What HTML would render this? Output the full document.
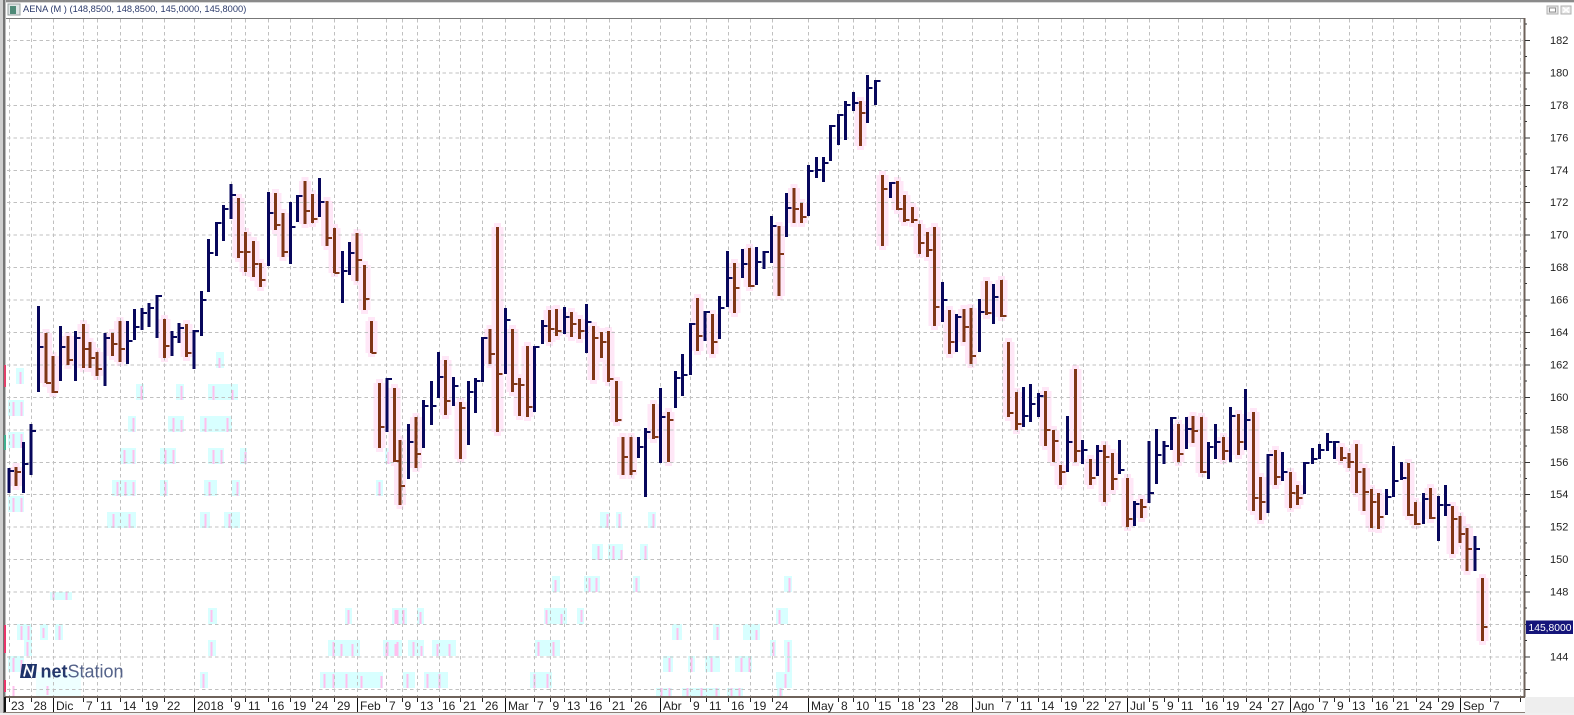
<!DOCTYPE html>
<html><head><meta charset="utf-8"><title>AENA</title>
<style>html,body{margin:0;padding:0;background:#fff;width:1574px;height:715px;overflow:hidden}svg{display:block}text{font-family:"Liberation Sans",sans-serif}</style></head>
<body>
<svg width="1574" height="715" viewBox="0 0 1574 715" xmlns="http://www.w3.org/2000/svg">
<defs>
<path id="rs" d="M16 467V486M46 333V383M53 356V393M68 336V365M83.5 324V368M90 342V368M97 352V376M112.5 333V356M120 321V362M164.5 319V358M186.5 324V357M238.5 198V258M245.5 232V272M253.5 241V277M260.5 263V287M275.5 193V230M283 213V257M305 181V224M312.5 194V223M327 201V246M334.5 228V273M357 233V281M364.5 265V310M371.5 321V353M379.5 383V448M394.5 388V462M400 440V505M416 417V468M445.5 360V415M460.5 402V459M490 329V364M497.5 227V432M512.5 329V392M519.5 378V416M527.5 346V417M549.5 310V342M556.5 309V336M571.5 312V337M579.5 319V339M593.5 326V380M601.5 332V358M608.5 331V382M616.5 381V422M623 437V475M631 437V475M653.5 404V439M668.5 412V462M697.5 298V351M712.5 314V354M734.5 263V313M749.5 248V287M779 226V296M794 188V223M801.5 203V223M860.5 101V146M882.5 175V246M897.5 181V210M904.5 195V222M912.5 207V223M919.5 224V254M927.5 232V257M934.5 227V326M949.5 310V354M964 309V342M971 308V364M986.5 281V315M1001.5 280V317M1008.5 342V417M1016.5 392V430M1045.5 391V446M1053.5 430V462M1060.5 465V485M1075.5 369V462M1090.5 459V485M1104.5 445V502M1112.5 453V490M1127.5 478V527M1141.5 499V518M1178.5 424V462M1193 416V443M1201.5 417V473M1223.5 437V460M1238.5 414V455M1253.5 412V511M1260.5 477V520M1275.5 450V485M1290.5 472V508M1297.5 485V505M1341.5 447V461M1349 453V468M1356.5 444V493M1364 468V511M1371.5 489V528M1378.5 493V529M1408.5 463V516M1415.5 502V525M1430.5 488V519M1452.5 506V554M1460 516V543M1467 528V571M1482.5 578V641"/>
</defs>
<rect width="1574" height="715" fill="#fff"/>
<!-- ghost artefacts -->
<rect x="36" y="672" width="45" height="24" fill="#eeffff"/>
<path fill="#d8ffff" d="M136 384h8v16h-8zM176 384h8v16h-8zM208 384h30v16h-30zM128 416h8v16h-8zM168 416h16v16h-16zM200 416h32v16h-32zM120 448h16v16h-16zM160 448h16v16h-16zM208 448h16v16h-16zM240 448h7v16h-7zM112 480h24v16h-24zM160 480h8v16h-8zM204 480h13v16h-13zM232 480h8v16h-8zM107 512h29v16h-29zM200 512h10v16h-10zM224 512h16v16h-16zM16 368h8v16h-8zM8 400h16v16h-16zM8 432h16v16h-16zM8 496h16v16h-16zM376 480h7v16h-7zM385 448h8v16h-8zM216 352h8v16h-8zM600 512h10v16h-10zM616 512h6v16h-6zM648 512h8v16h-8zM592 544h11v16h-11zM608 544h15v16h-15zM640 544h8v16h-8zM552 576h8v16h-8zM584 576h16v16h-16zM633 576h7v16h-7zM784 576h8v16h-8zM392 608h15v16h-15zM417 608h7v16h-7zM544 608h23v16h-23zM577 608h7v16h-7zM776 608h12v16h-12zM384 640h18v16h-18zM408 640h16v16h-16zM432 640h24v16h-24zM535 640h25v16h-25zM770 640h6v16h-6zM784 640h8v16h-8zM663 656h10v16h-10zM688 656h7v16h-7zM705 656h15v16h-15zM735 656h17v16h-17zM785 656h7v16h-7zM403 672h12v16h-12zM424 672h24v16h-24zM530 672h22v16h-22zM776 672h16v16h-16zM656 688h16v8h-16zM682 688h38v8h-38zM727 688h16v8h-16zM777 688h6v8h-6zM713 624h7v16h-7zM743 624h17v16h-17zM672 624h10v16h-10zM17 624h15v16h-15zM40 624h8v16h-8zM55 624h8v16h-8zM24 640h8v16h-8zM208 640h8v16h-8zM328 640h32v16h-32zM383 640h17v16h-17zM8 656h16v16h-16zM200 672h8v16h-8zM320 672h63v16h-63zM208 608h9v16h-9zM345 608h7v16h-7zM392 608h8v16h-8zM50 592h22v8h-22z"/>
<path fill="#ffbfee" d="M140.500 386h2v14h-2zM180.500 386h2v14h-2zM212.500 386h2v14h-2zM231.500 390h2v10h-2zM132.500 418h2v14h-2zM172.500 418h2v14h-2zM180.500 420h2v12h-2zM204.500 418h2v14h-2zM226.500 418h2v14h-2zM123.500 450h2v14h-2zM132.500 450h2v14h-2zM164.500 450h2v14h-2zM172.500 450h2v14h-2zM212.500 450h2v14h-2zM220.500 450h2v14h-2zM244.500 452h2v12h-2zM116.500 482h2v14h-2zM124.500 482h2v14h-2zM132.500 482h2v14h-2zM164.500 482h2v14h-2zM208.500 482h2v14h-2zM236.500 482h2v14h-2zM112.500 514h2v14h-2zM128.500 514h2v14h-2zM204.500 514h2v14h-2zM228.500 514h2v14h-2zM19.500 372h2v12h-2zM12.500 402h2v14h-2zM20.500 402h2v14h-2zM12.500 434h2v14h-2zM20.500 434h2v14h-2zM12.500 498h2v14h-2zM20.500 498h2v14h-2zM378.500 482h2v14h-2zM387.500 452h2v12h-2zM218.500 358h2v10h-2zM606.500 514h2v14h-2zM618.500 514h2v14h-2zM652.500 514h2v14h-2zM597.500 546h2v14h-2zM612.500 546h2v14h-2zM620.500 550h2v10h-2zM644.500 546h2v14h-2zM554.500 580h2v12h-2zM588.500 578h2v14h-2zM595.500 578h2v14h-2zM635.500 578h2v14h-2zM788.500 578h2v14h-2zM396.500 610h2v14h-2zM402.500 610h2v14h-2zM419.500 612h2v12h-2zM545.500 610h2v14h-2zM560.500 614h2v10h-2zM580.500 610h2v12h-2zM778.500 610h2v14h-2zM386.500 642h2v14h-2zM396.500 642h2v14h-2zM412.500 642h2v14h-2zM420.500 646h2v10h-2zM436.500 644h2v12h-2zM448.500 644h2v12h-2zM537.500 642h2v14h-2zM552.500 642h2v14h-2zM772.500 642h2v14h-2zM787.500 642h2v14h-2zM668.500 658h2v14h-2zM690.500 658h2v14h-2zM710.500 658h2v14h-2zM740.500 658h2v14h-2zM748.500 658h2v14h-2zM787.500 658h2v14h-2zM406.500 674h2v14h-2zM426.500 674h2v14h-2zM438.500 674h2v14h-2zM533.500 674h2v14h-2zM546.500 674h2v14h-2zM784.500 674h2v14h-2zM660.500 688h2v8h-2zM668.500 688h2v8h-2zM686.500 688h2v8h-2zM700.500 688h2v8h-2zM715.500 688h2v8h-2zM730.500 688h2v8h-2zM738.500 688h2v8h-2zM779.500 688h2v8h-2zM716.500 627h2v13h-2zM755.500 630h2v10h-2zM676.500 628h2v12h-2zM20.500 626h2v14h-2zM27.500 626h2v14h-2zM42.500 628h2v10h-2zM58.500 626h2v14h-2zM26.500 642h2v14h-2zM210.500 642h2v14h-2zM332.500 642h2v14h-2zM340.500 644h2v12h-2zM351.500 644h2v12h-2zM385.500 644h2v12h-2zM394.500 644h2v12h-2zM12.500 658h2v14h-2zM20.500 660h2v12h-2zM202.500 674h2v14h-2zM323.500 674h2v14h-2zM332.500 674h2v14h-2zM345.500 674h2v14h-2zM360.500 676h2v12h-2zM380.500 676h2v12h-2zM210.500 610h2v12h-2zM347.500 610h2v14h-2zM394.500 610h2v14h-2zM52.500 592h2v8h-2zM65.500 592h2v8h-2zM46.500 686h2v9h-2zM12.500 686h2v10h-2z"/>
<!-- red halos -->
<use href="#rs" fill="none" stroke="#ffe7f7" stroke-width="12"/>
<use href="#rs" fill="none" stroke="#ffe7f7" stroke-width="7" transform="translate(0,-4)"/>
<use href="#rs" fill="none" stroke="#ffe7f7" stroke-width="7" transform="translate(0,4)"/>
<!-- grid -->
<path fill="none" stroke="#c0c0c0" stroke-width="1" stroke-dasharray="3.500 3" d="M7 40.500H1523M7 73H1523M7 105.500H1523M7 138H1523M7 170.500H1523M7 202.500H1523M7 235H1523M7 267.500H1523M7 300H1523M7 332.500H1523M7 365H1523M7 397.500H1523M7 430H1523M7 462.500H1523M7 494.500H1523M7 527H1523M7 559.500H1523M7 592H1523M7 624.500H1523M7 657H1523M7 689.500H1523"/>
<path fill="none" stroke="#c0c0c0" stroke-width="1" stroke-dasharray="3.500 3" d="M9.500 19V696M31.500 19V696M53.500 19V696M83.500 19V696M97.500 19V696M120.500 19V696M142.500 19V696M164.500 19V696M194.500 19V696M231.500 19V696M245.500 19V696M268.500 19V696M290.500 19V696M312.500 19V696M334.500 19V696M357.500 19V696M386.500 19V696M402.500 19V696M417.500 19V696M439.500 19V696M460.500 19V696M482.500 19V696M505.500 19V696M534.500 19V696M550.500 19V696M564.500 19V696M586.500 19V696M609.500 19V696M631.500 19V696M660.500 19V696M690.500 19V696M706.500 19V696M728.500 19V696M750.500 19V696M772.500 19V696M808.500 19V696M838.500 19V696M853.500 19V696M875.500 19V696M898.500 19V696M919.500 19V696M942.500 19V696M972.500 19V696M1002.500 19V696M1017.500 19V696M1038.500 19V696M1061.500 19V696M1083.500 19V696M1105.500 19V696M1127.500 19V696M1149.500 19V696M1178.500 19V696M1202.500 19V696M1223.500 19V696M1246.500 19V696M1268.500 19V696M1290.500 19V696M1319.500 19V696M1349.500 19V696M1372.500 19V696M1393.500 19V696M1416.500 19V696M1438.500 19V696M1460.500 19V696M1490.500 19V696M1520.500 19V696"/>
<!-- bars -->
<use href="#rs" fill="none" stroke="#7f3516" stroke-width="3"/>
<path fill="none" stroke="#7f3516" stroke-width="2" d="M16 472h5M46 383h5M53 392h5M68 360h5M83.5 349h5M90 358h5M97 369h5M112.5 344h5M120 349h5M164.5 346h5M186.5 353h5M238.5 252h5M245.5 252h5M253.5 264h5M260.5 280h5M275.5 225h5M283 252h5M305 211h5M312.5 219h5M327 238h5M334.5 273h5M357 260h5M364.5 299h5M371.5 353h5M379.5 427h5M394.5 461h5M400 486h5M416 454h5M445.5 401h5M460.5 408h5M490 354h5M497.5 374h5M512.5 384h5M519.5 385h5M527.5 407h5M549.5 329h5M556.5 331h5M571.5 324h5M579.5 331h5M593.5 338h5M601.5 342h5M608.5 379h5M616.5 420h5M623 457h5M631 471h5M653.5 437h5M668.5 420h5M697.5 336h5M712.5 342h5M734.5 288h5M749.5 286h5M779 254h5M794 209h5M801.5 217h5M860.5 113h5M882.5 189h5M897.5 209h5M904.5 220h5M912.5 220h5M919.5 243h5M927.5 250h5M934.5 307h5M949.5 342h5M964 327h5M971 356h5M986.5 313h5M1001.5 316h5M1008.5 413h5M1016.5 424h5M1045.5 430h5M1053.5 441h5M1060.5 472h5M1075.5 451h5M1090.5 478h5M1104.5 457h5M1112.5 479h5M1127.5 519h5M1141.5 507h5M1178.5 454h5M1193 431h5M1201.5 472h5M1223.5 451h5M1238.5 442h5M1253.5 498h5M1260.5 502h5M1275.5 477h5M1290.5 493h5M1297.5 498h5M1341.5 458h5M1349 462h5M1356.5 472h5M1364 492h5M1371.5 502h5M1378.5 517h5M1408.5 515h5M1415.5 524h5M1430.5 518h5M1452.5 519h5M1460 534h5M1467 549h5M1482.5 627h5"/>
<path fill="none" stroke="#07075c" stroke-width="3" d="M9 468V493M23.5 442V493M31 424V475M38.5 306V392M60.5 326V381M75.5 331V381M105 333V386M127.5 321V364M134.5 309V340M142 308V330M149 303V327M157 295V338M172 331V356M179 323V343M194 330V369M201.5 291V336M208.5 239V292M216.5 222V256M223.5 205V241M231 184V219M268.5 192V266M290.5 202V264M297.5 195V222M319.5 178V217M342.5 251V303M349.5 242V275M387 378V432M408.5 424V479M423.5 400V448M431.5 381V425M438.5 352V398M453.5 377V406M468.5 381V445M475.5 378V413M482.5 337V382M505.5 308V374M534.5 346V412M542.5 320V344M564.5 307V334M586.5 304V353M638.5 437V458M645.5 428V497M660.5 388V463M675.5 371V408M682.5 354V396M690.5 323V375M705 311V341M719.5 296V339M727.5 251V307M742.5 249V278M756.5 247V285M764 251V269M771.5 216V263M786.5 193V237M808.5 165V216M816.5 157V178M823.5 157V182M830.5 125V161M838.5 114V145M845.5 101V140M853.5 92V111M867.5 75V123M875.5 80V105M890.5 182V198M942.5 282V322M956.5 314V352M979.5 299V352M993.5 284V324M1023.5 387V427M1030.5 384V422M1038.5 393V417M1067.5 416V472M1082.5 440V464M1097.5 445V476M1119.5 440V474M1134.5 501V526M1149 441V503M1156.5 429V484M1164 441V464M1171.5 417V450M1186.5 417V449M1208.5 442V479M1215.5 424V459M1230.5 407V462M1245.5 389V450M1268 454V513M1282.5 452V481M1304.5 462V494M1312.5 448V464M1319.5 444V459M1327.5 433V451M1334.5 441V459M1386.5 489V515M1393.5 446V497M1401.5 462V480M1423.5 493V524M1438.5 496V541M1445.5 485V516M1475 536V571"/>
<path fill="none" stroke="#07075c" stroke-width="2" d="M9 471h5M23.5 464h5M31 431h5M38.5 347h5M60.5 347h5M75.5 338h5M105 338h5M127.5 341h5M134.5 327h5M142 313h5M149 308h5M157 296h5M172 337h5M179 328h5M194 331h5M201.5 300h5M208.5 253h5M216.500 223h5M223.5 209h5M231 195h5M268.5 213h5M290.5 227h5M297.5 196h5M319.5 202h5M342.5 271h5M349.5 253h5M387 379h5M408.5 442h5M423.5 406h5M431.5 406h5M438.5 377h5M453.5 386h5M468.5 392h5M475.5 381h5M482.5 338h5M505.5 320h5M534.5 347h5M542.5 326h5M564.5 317h5M586.5 322h5M638.5 447h5M645.5 432h5M660.5 417h5M675.5 378h5M682.5 375h5M690.5 324h5M705 312h5M719.5 308h5M727.5 278h5M742.5 264h5M756.5 262h5M764 252h5M771.5 226h5M786.5 208h5M808.5 171h5M816.5 170h5M823.5 163h5M830.5 126h5M838.5 115h5M845.5 105h5M853.5 103h5M867.5 88h5M875.5 81h5M890.5 183h5M942.5 300h5M956.5 317h5M979.5 312h5M993.5 297h5M1023.5 416h5M1030.5 404h5M1038.5 396h5M1067.5 442h5M1082.5 450h5M1097.5 451h5M1119.5 470h5M1134.5 504h5M1149 493h5M1156.5 455h5M1164 446h5M1171.5 418h5M1186.5 429h5M1208.5 447h5M1215.5 442h5M1230.5 416h5M1245.5 420h5M1268 455h5M1282.5 472h5M1304.5 463h5M1312.5 459h5M1319.5 450h5M1327.5 442h5M1334.5 442h5M1386.5 497h5M1393.5 481h5M1401.5 478h5M1423.5 499h5M1438.5 505h5M1445.5 505h5M1475 549h5"/>
<!-- frame -->
<rect x="0" y="0" width="1574" height="18" fill="#fff"/>
<rect x="0" y="0" width="1574" height="2" fill="#8a8a8a"/>
<rect x="0" y="2" width="1574" height="1" fill="#d8d8d8"/>
<rect x="0" y="18" width="1524" height="1" fill="#777"/>
<rect x="0" y="0" width="3" height="715" fill="#cfcfcf"/>
<rect x="3" y="0" width="2" height="715" fill="#767676"/>
<rect x="5" y="0" width="1" height="715" fill="#bdbdbd"/>
<rect x="4" y="365" width="2" height="22" fill="#e0406a"/>
<rect x="4" y="435" width="2" height="15" fill="#40b090"/>
<rect x="4" y="625" width="2" height="28" fill="#e8356a"/>
<rect x="4" y="680" width="2" height="12" fill="#e8356a"/>
<!-- title -->
<rect x="8" y="4" width="12" height="11" fill="#dfe6e6" stroke="#9aa0a0"/>
<rect x="10" y="6" width="6" height="8" fill="#4f8a78"/>
<text x="23" y="12" font-size="9.300" fill="#2b3a6b">AENA (M ) (148,8500, 148,8500, 145,0000, 145,8000)</text>
<rect x="1547" y="6" width="11" height="8" fill="#e8e8e8" stroke="#b0b0b0"/>
<rect x="1549.500" y="8" width="6" height="4" fill="#fff" stroke="#8f8f8f"/>
<rect x="1561" y="6" width="10" height="8" fill="#e8e8e8" stroke="#b0b0b0"/>
<path d="M1563 7.500l6 5M1569 7.500l-6 5" stroke="#fff" stroke-width="1.500"/>
<!-- logo -->
<path d="M22 664h15l-1.500 14h-15.500z" fill="#1d3269"/>
<path d="M24 676.500l2.500-10.500 5 10 2-10.500" fill="none" stroke="#fff" stroke-width="1.800"/>
<text x="40.500" y="677.500" font-size="18" fill="#55638a"><tspan font-weight="bold" fill="#25386c">net</tspan>Station</text>
<!-- right axis -->
<rect x="1525" y="19" width="49" height="678" fill="#fff"/>
<rect x="1523.500" y="18" width="2" height="680" fill="#6e625a"/>
<rect x="1525" y="697" width="49" height="18" fill="#eeeeee"/>
<path stroke="#333" stroke-width="1" d="M1525 40.500h5M1525 73h5M1525 105.500h5M1525 138h5M1525 170.500h5M1525 202.500h5M1525 235h5M1525 267.500h5M1525 300h5M1525 332.500h5M1525 365h5M1525 397.500h5M1525 430h5M1525 462.500h5M1525 494.500h5M1525 527h5M1525 559.500h5M1525 592h5M1525 624.500h5M1525 657h5M1525 689.500h5M1525 24h2M1525 56.500h2M1525 89h2M1525 121.500h2M1525 154h2M1525 186.500h2M1525 219h2M1525 251h2M1525 283.500h2M1525 316h2M1525 348.500h2M1525 381h2M1525 413.500h2M1525 446h2M1525 478.500h2M1525 511h2M1525 543h2M1525 575.500h2M1525 608h2M1525 640.500h2M1525 673h2"/>
<g font-size="11" fill="#222">
<text x="1550" y="44">182</text><text x="1550" y="76.500">180</text><text x="1550" y="109">178</text><text x="1550" y="141.500">176</text><text x="1550" y="174">174</text><text x="1550" y="206">172</text><text x="1550" y="238.500">170</text><text x="1550" y="271">168</text><text x="1550" y="303.500">166</text><text x="1550" y="336">164</text><text x="1550" y="368.500">162</text><text x="1550" y="401">160</text><text x="1550" y="433.500">158</text><text x="1550" y="466">156</text><text x="1550" y="498">154</text><text x="1550" y="530.500">152</text><text x="1550" y="563">150</text><text x="1550" y="595.500">148</text><text x="1550" y="660.500">144</text>
</g>
<rect x="1526" y="620.500" width="47" height="13.500" fill="#15157a"/>
<text x="1528.500" y="631" font-size="10.300" fill="#fff">145,8000</text>
<!-- date axis -->
<rect x="6" y="697" width="1518" height="15" fill="#fff"/>
<rect x="5" y="696" width="1520" height="2" fill="#6e625a"/>
<rect x="5" y="712" width="1520" height="1" fill="#8a8078"/>
<rect x="4" y="697" width="2" height="15" fill="#111"/>
<rect x="0" y="713" width="1574" height="2" fill="#f0f0f0"/>
<path stroke="#222" stroke-width="1" d="M9.500 698v4M31.500 698v4M83.500 698v4M97.500 698v4M120.500 698v4M142.500 698v4M164.500 698v4M231.500 698v4M245.500 698v4M268.500 698v4M290.500 698v4M312.500 698v4M334.500 698v4M386.500 698v4M402.500 698v4M417.500 698v4M439.500 698v4M460.500 698v4M482.500 698v4M534.500 698v4M550.500 698v4M564.500 698v4M586.500 698v4M609.500 698v4M631.500 698v4M690.500 698v4M706.500 698v4M728.500 698v4M750.500 698v4M772.500 698v4M838.500 698v4M853.500 698v4M875.500 698v4M898.500 698v4M919.500 698v4M942.500 698v4M1002.500 698v4M1017.500 698v4M1038.500 698v4M1061.500 698v4M1083.500 698v4M1105.500 698v4M1149.500 698v4M1164.500 698v4M1178.500 698v4M1202.500 698v4M1223.500 698v4M1246.500 698v4M1268.500 698v4M1319.500 698v4M1334.500 698v4M1349.500 698v4M1372.500 698v4M1393.500 698v4M1416.500 698v4M1438.500 698v4M1490.500 698v4M1520.500 698v4"/>
<path stroke="#111" stroke-width="1" d="M53.500 698v14M194.500 698v14M357.500 698v14M505.500 698v14M660.500 698v14M808.500 698v14M972.500 698v14M1127.500 698v14M1290.500 698v14M1460.500 698v14"/>
<g font-size="12" fill="#222">
<text x="11" y="710">23</text><text x="33.500" y="710">28</text><text x="56" y="710">Dic</text><text x="86" y="710">7</text><text x="100" y="710">11</text><text x="123" y="710">14</text><text x="145" y="710">19</text><text x="167" y="710">22</text><text x="197" y="710">2018</text><text x="234" y="710">9</text><text x="248" y="710">11</text><text x="271" y="710">16</text><text x="293" y="710">19</text><text x="315" y="710">24</text><text x="337" y="710">29</text><text x="360" y="710">Feb</text><text x="389" y="710">7</text><text x="404.500" y="710">9</text><text x="420" y="710">13</text><text x="442" y="710">16</text><text x="463" y="710">21</text><text x="485" y="710">26</text><text x="508" y="710">Mar</text><text x="537" y="710">7</text><text x="552.500" y="710">9</text><text x="567" y="710">13</text><text x="589" y="710">16</text><text x="612" y="710">21</text><text x="634" y="710">26</text><text x="663" y="710">Abr</text><text x="693" y="710">9</text><text x="709" y="710">11</text><text x="731" y="710">16</text><text x="753" y="710">19</text><text x="775" y="710">24</text><text x="811" y="710">May</text><text x="841" y="710">8</text><text x="856" y="710">10</text><text x="878" y="710">15</text><text x="901" y="710">18</text><text x="922" y="710">23</text><text x="945" y="710">28</text><text x="975" y="710">Jun</text><text x="1005" y="710">7</text><text x="1020" y="710">11</text><text x="1041" y="710">14</text><text x="1064" y="710">19</text><text x="1086" y="710">22</text><text x="1108" y="710">27</text><text x="1130" y="710">Jul</text><text x="1152" y="710">5</text><text x="1167" y="710">9</text><text x="1181" y="710">11</text><text x="1205" y="710">16</text><text x="1226" y="710">19</text><text x="1249" y="710">24</text><text x="1271" y="710">27</text><text x="1293" y="710">Ago</text><text x="1322" y="710">7</text><text x="1337" y="710">9</text><text x="1352" y="710">13</text><text x="1375" y="710">16</text><text x="1396" y="710">21</text><text x="1419" y="710">24</text><text x="1441" y="710">29</text><text x="1463" y="710">Sep</text><text x="1493" y="710">7</text>
</g>
</svg>
</body></html>
